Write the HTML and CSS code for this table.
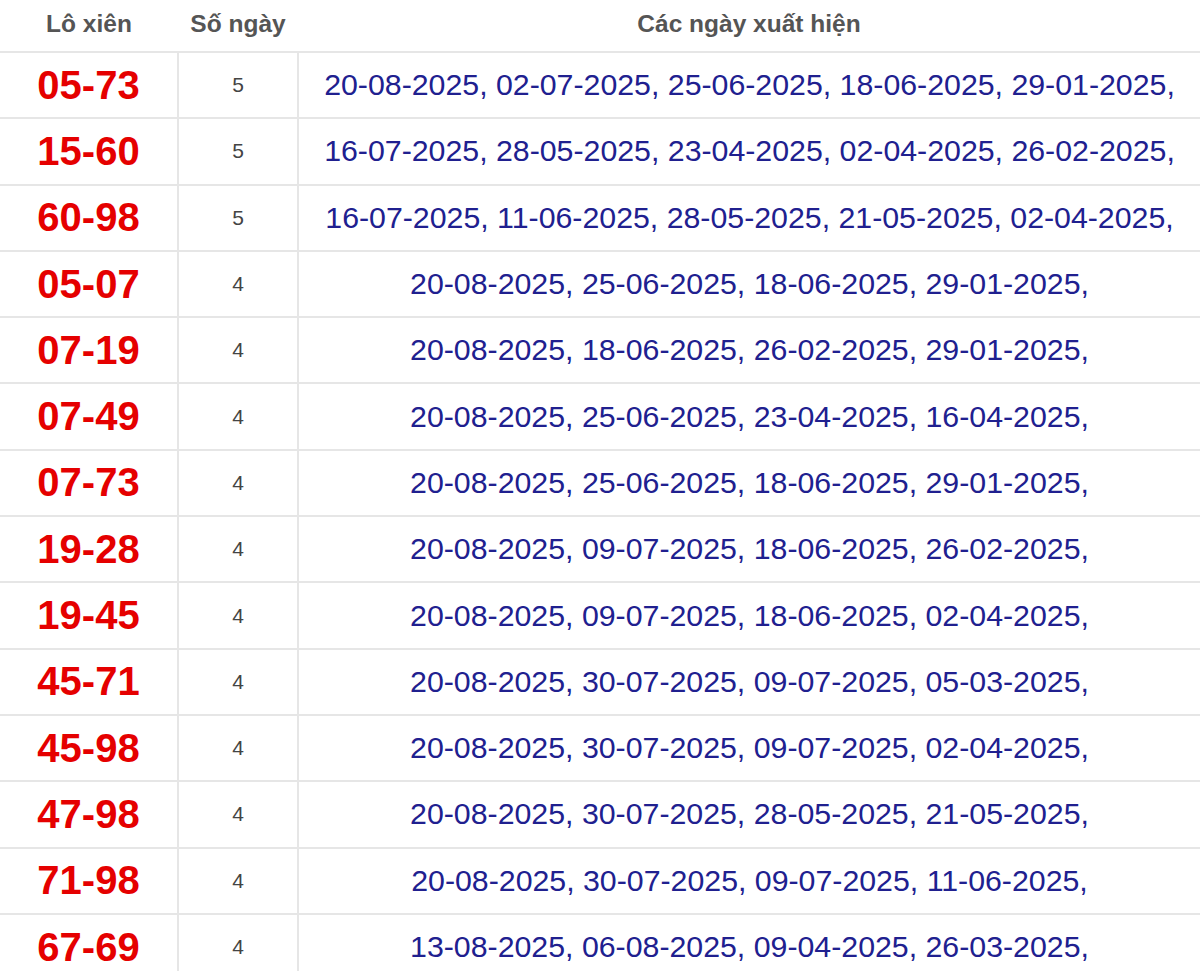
FILE: index.html
```html
<!DOCTYPE html>
<html lang="vi">
<head>
<meta charset="utf-8">
<title>Lô xiên</title>
<link rel="stylesheet" href="styles.css">
</head>
<body>
<table class="xien-table">
  <colgroup>
    <col class="col-pair">
    <col class="col-count">
    <col class="col-dates">
  </colgroup>
  <thead>
    <tr>
      <th>Lô xiên</th>
      <th>Số ngày</th>
      <th>Các ngày xuất hiện</th>
    </tr>
  </thead>
  <tbody>
    <tr><td class="pair">05-73</td><td class="count">5</td><td class="dates">20-08-2025, 02-07-2025, 25-06-2025, 18-06-2025, 29-01-2025,</td></tr>
    <tr><td class="pair">15-60</td><td class="count">5</td><td class="dates">16-07-2025, 28-05-2025, 23-04-2025, 02-04-2025, 26-02-2025,</td></tr>
    <tr><td class="pair">60-98</td><td class="count">5</td><td class="dates">16-07-2025, 11-06-2025, 28-05-2025, 21-05-2025, 02-04-2025,</td></tr>
    <tr><td class="pair">05-07</td><td class="count">4</td><td class="dates">20-08-2025, 25-06-2025, 18-06-2025, 29-01-2025,</td></tr>
    <tr><td class="pair">07-19</td><td class="count">4</td><td class="dates">20-08-2025, 18-06-2025, 26-02-2025, 29-01-2025,</td></tr>
    <tr><td class="pair">07-49</td><td class="count">4</td><td class="dates">20-08-2025, 25-06-2025, 23-04-2025, 16-04-2025,</td></tr>
    <tr><td class="pair">07-73</td><td class="count">4</td><td class="dates">20-08-2025, 25-06-2025, 18-06-2025, 29-01-2025,</td></tr>
    <tr><td class="pair">19-28</td><td class="count">4</td><td class="dates">20-08-2025, 09-07-2025, 18-06-2025, 26-02-2025,</td></tr>
    <tr><td class="pair">19-45</td><td class="count">4</td><td class="dates">20-08-2025, 09-07-2025, 18-06-2025, 02-04-2025,</td></tr>
    <tr><td class="pair">45-71</td><td class="count">4</td><td class="dates">20-08-2025, 30-07-2025, 09-07-2025, 05-03-2025,</td></tr>
    <tr><td class="pair">45-98</td><td class="count">4</td><td class="dates">20-08-2025, 30-07-2025, 09-07-2025, 02-04-2025,</td></tr>
    <tr><td class="pair">47-98</td><td class="count">4</td><td class="dates">20-08-2025, 30-07-2025, 28-05-2025, 21-05-2025,</td></tr>
    <tr><td class="pair">71-98</td><td class="count">4</td><td class="dates">20-08-2025, 30-07-2025, 09-07-2025, 11-06-2025,</td></tr>
    <tr><td class="pair">67-69</td><td class="count">4</td><td class="dates">13-08-2025, 06-08-2025, 09-04-2025, 26-03-2025,</td></tr>
  </tbody>
</table>
</body>
</html>
```
FILE: styles.css
```css
html, body {
  margin: 0;
  padding: 0;
  background: #ffffff;
}

body {
  font-family: "Liberation Sans", Arial, sans-serif;
}

.xien-table {
  width: 1200px;
  border-collapse: collapse;
  table-layout: fixed;
}

.col-pair { width: 178px; }
.col-count { width: 120px; }

.xien-table th {
  height: 47px;
  padding: 0 0 4px;
  font-size: 24.5px;
  font-weight: bold;
  color: #555555;
  text-align: center;
  vertical-align: middle;
  border-bottom: 2px solid #e6e6e6;
}

.xien-table td {
  height: 64.3px;
  padding: 0;
  text-align: center;
  vertical-align: middle;
  border-bottom: 2px solid #e6e6e6;
  border-left: 2px solid #e6e6e6;
  white-space: nowrap;
}

.xien-table td:first-child {
  border-left: none;
}

.pair {
  font-size: 40px;
  font-weight: bold;
  color: #e50000;
}

.count {
  font-size: 21px;
  color: #444444;
}

.dates {
  font-size: 30.3px;
  color: #20208f;
}
```
